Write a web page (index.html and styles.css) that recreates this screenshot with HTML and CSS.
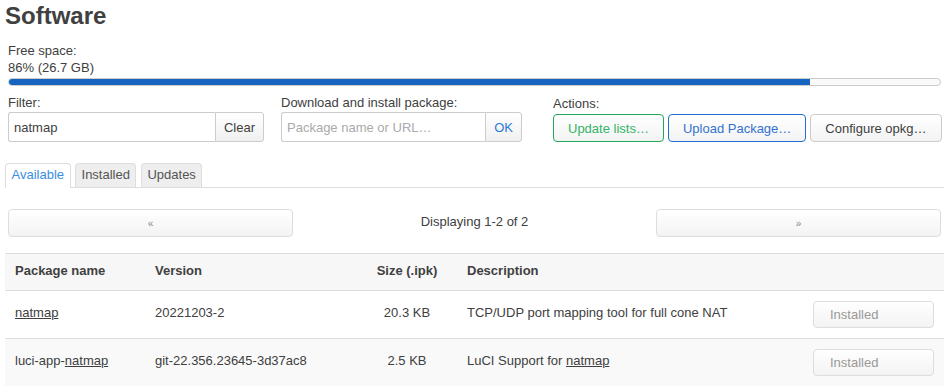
FILE: index.html
```html
<!DOCTYPE html>
<html lang="en">
<head>
  <meta charset="UTF-8" />
  <title>Software</title>
  <link rel="stylesheet" href="styles.css">
</head>
<body>
  <div class="page">
    <h2 class="title">Software</h2>

    <div class="space">
      <div>Free space:</div>
      <div>86% (26.7 GB)</div>
      <div class="bar"><div class="bar-fill" style="width:86%"></div></div>
    </div>

    <div class="controls">
      <div class="group group-filter">
        <label class="field-label">Filter:</label>
        <div class="input-group">
          <input type="text" value="natmap">
          <button class="addon">Clear</button>
        </div>
      </div>
      <div class="group group-download">
        <label class="field-label">Download and install package:</label>
        <div class="input-group">
          <input type="text" placeholder="Package name or URL…">
          <button class="addon addon-ok">OK</button>
        </div>
      </div>
      <div class="group group-actions">
        <label class="field-label">Actions:</label>
        <div class="actions">
          <button class="btn btn-positive">Update lists…</button>
          <button class="btn btn-action">Upload Package…</button>
          <button class="btn">Configure opkg…</button>
        </div>
      </div>
    </div>

    <ul class="tabs">
      <li class="tab active">Available</li>
      <li class="tab">Installed</li>
      <li class="tab">Updates</li>
    </ul>

    <div class="pager">
      <button class="pager-btn">&laquo;</button>
      <div class="pager-info">Displaying 1-2 of 2</div>
      <button class="pager-btn">&raquo;</button>
    </div>

    <table class="packages">
      <colgroup>
        <col style="width:140px">
        <col style="width:212px">
        <col style="width:100px">
        <col>
        <col style="width:141px">
      </colgroup>
      <thead>
        <tr>
          <th>Package name</th>
          <th>Version</th>
          <th class="size">Size (.ipk)</th>
          <th>Description</th>
          <th></th>
        </tr>
      </thead>
      <tbody>
        <tr>
          <td><a class="pkg-link" href="#">natmap</a></td>
          <td>20221203-2</td>
          <td class="size">20.3 KB</td>
          <td>TCP/UDP port mapping tool for full cone NAT</td>
          <td class="btn-cell"><button class="pkg-btn" disabled>Installed</button></td>
        </tr>
        <tr>
          <td>luci-app-<a class="pkg-link" href="#">natmap</a></td>
          <td>git-22.356.23645-3d37ac8</td>
          <td class="size">2.5 KB</td>
          <td>LuCI Support for <a class="pkg-link" href="#">natmap</a></td>
          <td class="btn-cell"><button class="pkg-btn" disabled>Installed</button></td>
        </tr>
      </tbody>
    </table>
  </div>
</body>
</html>
```

FILE: styles.css
```css
body {
  margin: 0;
  background: #fff;
  color: #404040;
  font-family: "Liberation Sans", Arial, sans-serif;
  font-size: 13px;
  line-height: 17px;
}
.page {
  padding: 0 4px 0 5px;
}
.title {
  margin: 2px 0 0;
  font-size: 24px;
  line-height: 28px;
  font-weight: bold;
  color: #404040;
}

/* free space */
.space {
  margin: 12px 3px 0;
}
.bar {
  height: 6px;
  margin-top: 2px;
  border: 1px solid #ccc;
  border-radius: 4px;
  background: #f9f9f9;
  overflow: hidden;
}
.bar-fill {
  height: 100%;
  background: #1565c0;
}

/* filter / download / actions */
.controls {
  display: flex;
  margin: 8px 3px 0;
}
.group-filter { width: 256px; margin-right: 17px; flex: none; }
.group-download { width: 241px; margin-right: 31px; flex: none; }
.group-actions { padding-top: 1px; flex: 1; }
.field-label {
  display: block;
}
.input-group {
  display: flex;
  height: 30px;
  margin-top: 1px;
}
.input-group input {
  flex: 1;
  min-width: 0;
  margin: 0;
  padding: 0 5px;
  border: 1px solid #ccc;
  border-right: 0;
  border-radius: 3px 0 0 3px;
  font: inherit;
  color: #404040;
  outline: none;
}
.input-group input::placeholder {
  color: #aaa;
}
.addon {
  margin: 0;
  padding: 0 8px;
  border: 1px solid #ccc;
  border-radius: 0 3px 3px 0;
  background: linear-gradient(#fff, #f0f0f0);
  font: inherit;
  color: #404040;
}
.addon-ok {
  color: #2a7ad8;
}
.actions {
  display: flex;
  gap: 4px;
  margin-top: 2px;
}
.btn {
  height: 28px;
  margin: 0;
  padding: 0 14px;
  border: 1px solid #ccc;
  border-radius: 4px;
  background: linear-gradient(#fff, #f3f3f3);
  font: inherit;
  color: #404040;
  white-space: nowrap;
  flex: none;
}
.btn-positive {
  border-color: #22a65a;
  color: #35b467;
}
.btn-action {
  border-color: #1f6fd1;
  color: #3472d0;
}

/* tabs */
.tabs {
  display: flex;
  gap: 4.5px;
  list-style: none;
  margin: 21px 0 0;
  padding: 0;
  border-bottom: 1px solid #ddd;
}
.tab {
  padding: 2px 5.5px 4px;
  border: 1px solid #ddd;
  border-bottom: 0;
  border-radius: 4px 4px 0 0;
  background: #eee;
  color: #555;
}
.tab.active {
  background: #fff;
  color: #3a8de2;
  padding-bottom: 5px;
  margin-bottom: -1px;
}

/* pager */
.pager {
  display: grid;
  grid-template-columns: 285px 1fr 285px;
  align-items: center;
  margin: 21px 3px 0;
}
.pager-btn {
  height: 28px;
  margin: 0;
  border: 1px solid #ddd;
  border-radius: 4px;
  background: linear-gradient(#fff, #f3f3f3);
  color: #888;
  font-family: inherit;
  font-size: 10px;
}
.pager-info {
  text-align: center;
  padding-bottom: 4px;
}

/* package table */
.packages {
  width: 100%;
  margin-top: 16px;
  border-collapse: collapse;
  table-layout: fixed;
}
.packages th {
  padding: 8px 10px 11px;
  border-top: 1px solid #ddd;
  border-bottom: 1px solid #ddd;
  background: #f7f7f7;
  text-align: left;
  font-weight: bold;
}
.packages td {
  padding: 8px 10px 12px;
  border-bottom: 1px solid #ddd;
  vertical-align: middle;
}
.packages tbody tr:nth-child(even) td {
  background: #f9f9f9;
}
.packages tbody tr:last-child td {
  border-bottom: 0;
}
.packages .size {
  text-align: center;
}
.packages td.btn-cell {
  padding: 10px 10px 10px 0;
  text-align: right;
}
.pkg-link {
  color: #404040;
  text-decoration: underline;
}
.pkg-btn {
  width: 121px;
  height: 27px;
  margin: 0;
  padding: 0 16px;
  border: 1px solid #ddd;
  border-radius: 4px;
  background: linear-gradient(#fff, #f3f3f3);
  color: #999;
  font: inherit;
  text-align: left;
}
```
